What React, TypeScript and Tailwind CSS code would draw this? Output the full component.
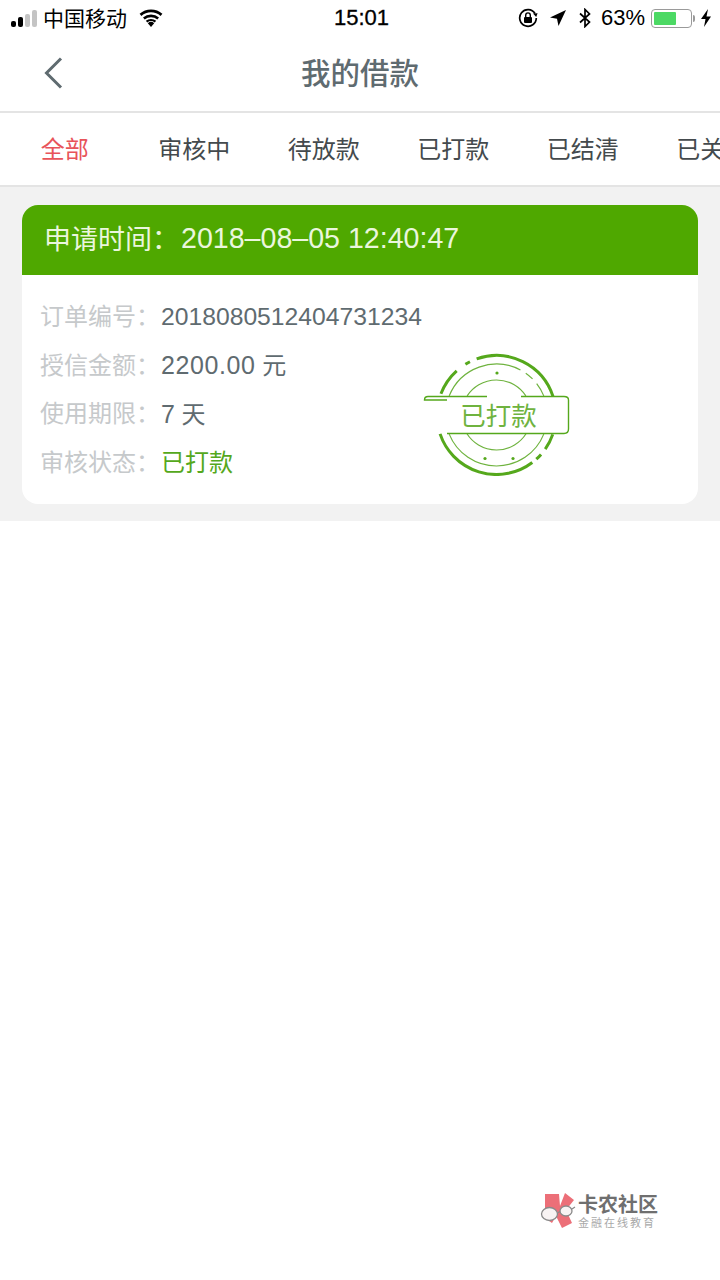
const cjk = { fontFamily: '"Liberation Sans","Noto Sans CJK SC",sans-serif' };

function StatusBar() {
  return (
    <div className="relative flex h-9 items-center justify-between bg-white pl-[11px] pr-[8px] text-[21px] text-black">
      <div className="flex items-center">
        <div className="flex items-end gap-[2px]">
          <span className="h-[6px] w-[5px] rounded-[2px] bg-black" />
          <span className="h-[10px] w-[5px] rounded-[2px] bg-black" />
          <span className="h-[13px] w-[5px] rounded-[2px] bg-[#c4c4c4]" />
          <span className="h-[17px] w-[5px] rounded-[2px] bg-[#c4c4c4]" />
        </div>
        <span className="ml-[6px] leading-none">中国移动</span>
        <svg className="ml-[11px]" width="26" height="20" viewBox="0 0 26 20">
          <path d="M13 19 L9.8 15.2 A5 5 0 0 1 16.2 15.2 Z" fill="#000" />
          <path d="M7.8 12.8 A8.2 8.2 0 0 1 18.2 12.8 L16.7 14.5 A6 6 0 0 0 9.3 14.5 Z" fill="#000" />
          <path d="M5 9.6 A12.2 12.2 0 0 1 21 9.6 L19.3 11.6 A9.6 9.6 0 0 0 6.7 11.6 Z" fill="#000" />
          <path d="M1.6 5.8 A17 17 0 0 1 24.4 5.8 L22.6 8 A14.2 14.2 0 0 0 3.4 8 Z" fill="#000" />
        </svg>
      </div>
      <div className="flex items-center">
        <svg width="20" height="20" viewBox="0 0 20 20" className="mr-[11px]">
          <path d="M17 5.5 A8.3 8.3 0 1 0 18.3 10" fill="none" stroke="#000" strokeWidth="1.7" />
          <path d="M15 5.5 L19.6 5.2 L18.2 9 Z" fill="#000" />
          <rect x="6" y="9" width="8" height="6" rx="1" fill="#000" />
          <path d="M7.7 9 V7.2 A2.3 2.3 0 0 1 12.3 7.2 V9" fill="none" stroke="#000" strokeWidth="1.4" />
        </svg>
        <svg width="18" height="18" viewBox="0 0 18 18" className="mr-[11px]">
          <path d="M17 1 L9.5 17 L8 9.8 L1 8.6 Z" fill="#000" />
        </svg>
        <svg width="14" height="20" viewBox="0 0 14 20" className="mr-[9px]">
          <path d="M2 5.5 L11.5 14 L7 18.5 V1.5 L11.5 6 L2 14.5" fill="none" stroke="#000" strokeWidth="1.7" />
        </svg>
        <span className="text-[22px] leading-none">63%</span>
        <div className="ml-[6px] flex h-[19px] w-[41px] items-center rounded-[4px] border-[1.5px] border-[#9a9a9a] p-[2px]">
          <div className="h-full w-[22px] rounded-[1px] bg-[#4cd964]" />
        </div>
        <span className="ml-[1px] h-[7px] w-[2px] rounded-r-sm bg-[#9a9a9a]" />
        <svg width="12" height="18" viewBox="0 0 12 18" className="ml-[5px]">
          <path d="M8 0 L1 10 H5.5 L4 18 L11 7.5 H6.5 Z" fill="#000" />
        </svg>
      </div>
      <span className="absolute left-[3px] right-0 top-[5px] text-center text-[22px] font-normal leading-[26px]" style={{ WebkitTextStroke: '0.3px #000' }}>
        15:01
      </span>
    </div>
  );
}

function arc(r: number, a0: number, a1: number) {
  const cx = 93.5;
  const cy = 69;
  const p = (a: number) => {
    const t = (a * Math.PI) / 180;
    return `${(cx + r * Math.cos(t)).toFixed(2)} ${(cy + r * Math.sin(t)).toFixed(2)}`;
  };
  const large = Math.abs(a1 - a0) > 180 ? 1 : 0;
  return `M${p(a0)} A${r} ${r} 0 ${large} 1 ${p(a1)}`;
}

function Stamp() {
  const g = '#55a81c';
  const outer: [number, number][] = [
    [-159, -132],
    [-121.5, -116.5],
    [-109.5, -18],
    [19, 35],
    [41.5, 48],
    [53, 161.5],
  ];
  const middle: [number, number][] = [
    [-158, -62],
    [-55, -45],
    [-38, -22],
    [22, 158],
  ];
  const inner: [number, number][] = [
    [-147, -33],
    [32, 148],
  ];
  return (
    <svg className="absolute left-[381px] top-[141px]" width="170" height="130" viewBox="0 0 170 130">
      <g fill="none" stroke={g}>
        {outer.map(([a, b]) => (
          <path key={a} d={arc(59.5, a, b)} strokeWidth="3" />
        ))}
        {middle.map(([a, b]) => (
          <path key={a} d={arc(51, a, b)} strokeWidth="1.2" stroke="#6fb33f" />
        ))}
        {inner.map(([a, b]) => (
          <path key={a} d={arc(35, a, b)} strokeWidth="1.2" stroke="#6fb33f" />
        ))}
        <path d="M84 50.5 H25 Q21.5 50.5 21.5 54 H44 M144 87.5 H161 Q165.5 87.5 165.5 83 V54 Q165.5 50.5 161 50.5 H118 M44 87.5 H144" strokeWidth="1.4" />
      </g>
      <circle cx="94" cy="27" r="1.6" fill={g} />
      <circle cx="82" cy="112.5" r="1.6" fill={g} />
      <circle cx="110" cy="112.5" r="1.6" fill={g} />
      <text x="95.5" y="79" textAnchor="middle" fontSize="25.5" fill="#6fb33f" style={cjk}>已打款</text>
    </svg>
  );
}

function Watermark() {
  return (
    <div className="absolute left-[540px] top-[1193px] flex items-start">
      <svg width="36" height="36" viewBox="0 0 36 36">
        <path d="M5 1 H19 L20 13 L25 0 L34 7 L26 17 L32 30 L22 35 L16 23 L12 30 L5 25 Z" fill="#ec6f78" />
        <ellipse cx="9.5" cy="21" rx="8" ry="6.5" fill="#f8f3f3" stroke="#8a8a8a" strokeWidth="1.3" />
        <ellipse cx="26" cy="18" rx="6" ry="5" fill="#f8f3f3" stroke="#8a8a8a" strokeWidth="1.3" />
        <path d="M17.5 20 L20 18.5 M32 16 L35 14" stroke="#8a8a8a" strokeWidth="1.3" />
      </svg>
      <div className="ml-[2px] flex flex-col">
        <span className="text-[20px] font-bold leading-[24px] text-[#6f6f6f]">卡农社区</span>
        <span className="text-[11px] leading-[12px] tracking-[2px] text-[#a9a9a9]">金融在线教育</span>
      </div>
    </div>
  );
}

const tabs = ['全部', '审核中', '待放款', '已打款', '已结清', '已关闭'];

function Row({ label, children }: { label: string; children: React.ReactNode }) {
  return (
    <div className="flex h-[48.6px] items-center text-[24px]">
      <span className="w-[121px] text-[#c6c9cb]">{label}</span>
      {children}
    </div>
  );
}

export default function App() {
  return (
    <div className="relative h-[1280px] w-[720px] overflow-hidden bg-white" style={cjk}>
      <StatusBar />
      <div className="relative flex h-[75px] items-center justify-center pt-[2px]">
        <svg className="absolute left-[43px] top-[20px]" width="20" height="34" viewBox="0 0 20 34">
          <path d="M18 2.5 L3.5 17 L18 31.5" fill="none" stroke="#5f6b70" strokeWidth="3" />
        </svg>
        <span className="text-[29.5px] font-medium text-[#5f6b70]">我的借款</span>
      </div>
      <div className="flex h-[76px] items-center overflow-hidden border-y-2 border-y-[#e4e4e4] pt-[2px]">
        {tabs.map((t, i) => (
          <div
            key={t}
            className={`w-[129.5px] shrink-0 text-center text-[24px] ${i === 0 ? 'text-[#e8545a]' : 'text-[#444a4d]'}`}
          >
            {t}
          </div>
        ))}
      </div>
      <div className="h-[334px] bg-[#f2f2f2] px-[22px] pt-[18px]">
        <div className="relative h-[299px] overflow-hidden rounded-[16px] bg-white">
          <div className="flex h-[70px] items-center bg-[#4fa800] pl-[22px] text-[27px] text-[#eaf6dd]">
            <span className="w-[137px]">申请时间：</span>
            <span className="pb-[3px] text-[28.6px]">2018–08–05 12:40:47</span>
          </div>
          <div className="flex flex-col pl-[18px] pt-[18px]">
            <Row label="订单编号：">
              <span className="pb-[2px] text-[24.7px] text-[#5f6b70]">2018080512404731234</span>
            </Row>
            <Row label="授信金额：">
              <span className="text-[#5f6b70]">
                <span className="text-[25px] tracking-[0.6px]">2200.00</span> 元
              </span>
            </Row>
            <Row label="使用期限：">
              <span className="text-[#5f6b70]">
                <span className="text-[25px]">7</span> 天
              </span>
            </Row>
            <Row label="审核状态：">
              <span className="text-[#55a81c]">已打款</span>
            </Row>
          </div>
          <Stamp />
        </div>
      </div>
      <Watermark />
    </div>
  );
}
